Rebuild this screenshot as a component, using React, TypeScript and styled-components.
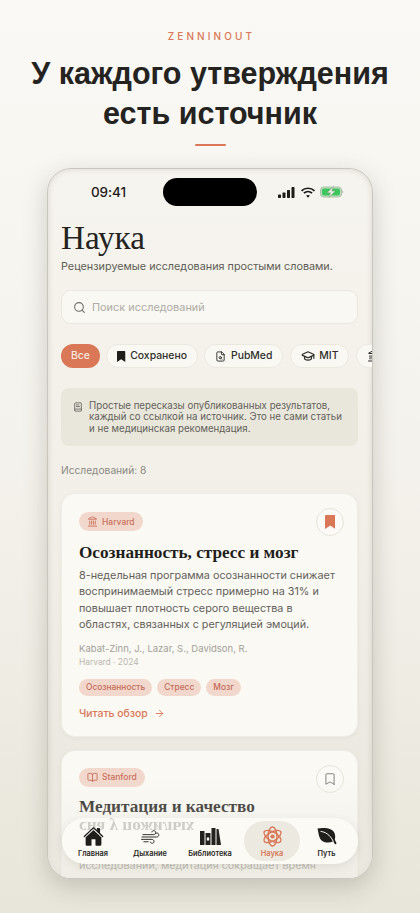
import React from 'react';
import styled, { createGlobalStyle } from 'styled-components';
import { Search, Landmark, GraduationCap, FileSearch, BookOpen, BookText, ArrowRight, Bookmark } from 'lucide-react';
import { IoHome } from 'react-icons/io5';

const Global = createGlobalStyle`
  html, body { margin: 0; padding: 0; }
  body { width: 420px; height: 913px; overflow: hidden; font-family: Inter, "Noto Sans", sans-serif; }
  * { box-sizing: border-box; }
`;

const Page = styled.div`
  width: 420px; height: 913px; overflow: hidden;
  background: linear-gradient(180deg, #faf9f5 0%, #f4f2ec 50%, #e8e6da 100%);
  display: flex; flex-direction: column; align-items: center; padding-top: 30px;
`;
const Brand = styled.div`
  font: 500 10px/12px Inter, sans-serif; letter-spacing: 3.1px; color: #d97757; margin-right: -3px;
`;
const Headline = styled.h1`
  margin: 11px 0 0; font: 700 30.5px/40px "Liberation Sans", Arial, sans-serif; color: #24231f; text-align: center;
`;
const Rule = styled.div`
  width: 31px; height: 2px; background: #d97757; margin-top: 11px; border-radius: 1px;
`;
const Phone = styled.div`
  position: relative; width: 326px; height: 711px; margin-top: 22px; border-radius: 24px; overflow: hidden;
  border: 1px solid #c9c7bd;
  box-shadow: 0 8px 24px rgba(60,55,40,.22), inset 0 0 6px rgba(90,85,70,.18);
  background: linear-gradient(180deg, #f6f4ee 0%, #f1efe7 50%, #e8e6dd 100%);
`;
const Status = styled.div`
  height: 47px; padding: 9px 0 0; display: grid; grid-template-columns: 1fr 94px 1fr; align-items: start;
`;
const Time = styled.div`
  font: 500 13.5px/28px Inter, sans-serif; color: #1d1c19; padding-left: 43px; letter-spacing: -.1px;
`;
const Island = styled.div`
  width: 94px; height: 28px; border-radius: 14px; background: #000;
`;
const StatusIcons = styled.div`
  display: flex; align-items: center; gap: 4.5px; height: 28px; padding-left: 21px;
`;
const Content = styled.div`
  padding: 3px 14px 0 13px;
`;
const Title = styled.h2`
  margin: 0; font: 400 33.2px/38px "Liberation Serif", "Times New Roman", serif; color: #24231f;
`;
const Sub = styled.p`
  margin: 2px 0 0; font: 400 10.8px/16px Inter, sans-serif; color: #5f5d56; white-space: nowrap;
`;
const SearchBox = styled.div`
  margin-top: 15px; height: 34px; border-radius: 10px; background: #f9f8f3; border: 1px solid #eae8de;
  display: flex; align-items: center; gap: 6px; padding: 0 11px; color: #6f6d66;
  font: 400 10.9px/16px Inter, sans-serif;
`;
const Placeholder = styled.span`
  color: #aeaca5;
`;
const Chips = styled.div`
  margin-top: 20px; display: flex; gap: 6.5px; width: 312px; overflow: hidden;
`;
const Chip = styled.div<{ $active?: boolean }>`
  flex: none; height: 24px; border-radius: 12px; padding: 0 10px;
  display: flex; align-items: center; gap: 4.5px; white-space: nowrap;
  font: 500 10.4px/14px Inter, sans-serif;
  color: ${p => (p.$active ? '#f8e9e0' : '#2e2d29')};
  background: ${p => (p.$active ? '#d97757' : '#f9f8f3')};
  border: ${p => (p.$active ? 'none' : '1px solid #ebe9df')};
`;
const Notice = styled.div`
  margin-top: 20px; height: 58px; border-radius: 8px; background: #e9e7dc; padding: 11.5px 10px 0 12px;
  display: flex; gap: 6px; color: #63615a; font: 400 9.7px/11.6px Inter, sans-serif;
`;
const Count = styled.div`
  margin-top: 17px; font: 400 10.2px/14px Inter, sans-serif; color: #8b8982;
`;
const Card = styled.article`
  position: relative; margin-top: 16px; border-radius: 14px; background: #faf9f4; padding: 17px 14px 15px 17px;
  border: 1px solid #efeee6; box-shadow: 0 1px 4px rgba(80,70,50,.05);
`;
const Card2 = styled(Card)`
  margin-top: 13px; padding-top: 16px;
`;
const Source = styled.div`
  display: inline-flex; align-items: center; gap: 4px; height: 19px; border-radius: 10px; padding: 0 8px;
  background: #f2d8cc; color: #c9705c; font: 500 8.5px/12px Inter, sans-serif;
`;
const Save = styled.div`
  position: absolute; top: 14px; right: 13px; width: 28px; height: 28px; border-radius: 50%;
  background: #fbfaf6; border: 1px solid #e6e4da; display: flex; align-items: center; justify-content: center;
  color: #6c6a63;
`;
const CardTitle = styled.h3`
  margin: 10px 0 0; font: 700 17.2px/24px "Liberation Serif", "Times New Roman", serif; color: #1f1e1b; white-space: nowrap;
`;
const CardTitle2 = styled(CardTitle)`
  margin-top: 9px; line-height: 22px;
`;
const Body = styled.p`
  margin: 3px 0 0; font: 400 10.8px/16.4px Inter, sans-serif; color: #63615a; white-space: nowrap;
`;
const Body2 = styled(Body)`
  margin-top: 2px;
`;
const Authors = styled.div`
  margin-top: 8px; font: 400 9.5px/14px Inter, sans-serif; color: #a3a199;
`;
const Meta = styled.div`
  margin-top: 1px; font: 400 8.4px/11px Inter, sans-serif; color: #bab8b0;
`;
const Tags = styled.div`
  display: flex; gap: 5px; margin-top: 11px;
`;
const Tag = styled.span`
  height: 17px; padding: 0 7px; border-radius: 9px; background: #f2d8cc; color: #c46a58;
  font: 500 8.4px/17px Inter, sans-serif;
`;
const Read = styled.div`
  margin-top: 11px; display: flex; align-items: center; gap: 6px; font: 500 10.4px/14px Inter, sans-serif; color: #d97757;
`;
const Fade = styled.div`
  position: absolute; left: 0; right: 0; bottom: 0; height: 100px; pointer-events: none;
  background: linear-gradient(180deg, rgba(235,233,224,0) 0%, rgba(235,233,224,.75) 100%);
`;
const Nav = styled.nav`
  position: absolute; left: 14px; bottom: 14px; width: 296px; height: 46px; border-radius: 23px;
  background: #fbfaf5; display: grid; grid-template-columns: 62px 52px 68px 56px 53px;
  box-shadow: 0 3px 10px rgba(70,65,50,.1); overflow: hidden;
`;
const Mirror = styled.div`
  position: absolute; left: 17px; top: 2px; transform: scaleY(-1); white-space: nowrap;
  font: 700 17.2px/15px "Liberation Serif", serif; color: #8c8a83; opacity: .4; filter: blur(.6px);
`;
const NavItem = styled.div<{ $active?: boolean }>`
  position: relative; display: flex; flex-direction: column; align-items: center; padding-top: 8px; height: 46px;
  font: 600 7.4px/10px Inter, sans-serif; color: ${p => (p.$active ? '#d97757' : '#2a2926')};
`;
const ActiveBg = styled.div`
  position: absolute; left: 0; right: 0; top: 3px; height: 40px; border-radius: 20px; background: #ebe9e0;
`;
const NavIcon = styled.div`
  position: relative; height: 21px; display: flex; align-items: center; justify-content: center; margin-bottom: 2px;
`;
const NavLabel = styled.span`
  position: relative; white-space: nowrap;
`;

const FilledBookmark = ({ color, size = 11 }: { color: string; size?: number }) => (
  <svg width={size * .75} height={size} viewBox="0 0 12 16"><path d="M1 0h10a1 1 0 0 1 1 1v15l-6-4-6 4V1a1 1 0 0 1 1-1z" fill={color} /></svg>
);

const Wind = () => (
  <svg width="19" height="18" viewBox="0 0 20 18" fill="none" stroke="#2a2926" strokeWidth="1" strokeLinecap="round">
    <path d="M2 6.5h11.5c2.2 0 2.6-3.8.3-4.2-1.3-.2-2.1.5-2.3 1.4" />
    <path d="M1 9h15.5c2.6 0 3-3.7.6-4.2-.8-.1-1.4.1-1.9.6" />
    <path d="M0.5 11.5h11c2.5 0 3 3.6.6 4.1-1.2.2-2-.4-2.3-1.3" />
    <path d="M3 14h4.5" />
  </svg>
);
const Books = () => (
  <svg width="21" height="19" viewBox="0 0 21 18" fill="#23221f">
    <rect x="0" y="3.5" width="4.5" height="14" />
    <path d="M5.5 5.5h5v12h-5z M6.8 10v3h2.4v-3z" fillRule="evenodd" />
    <rect x="11.5" y="0.5" width="4" height="17" />
    <path d="M16.5 1.5h2l2.5 16h-4.5z" />
  </svg>
);
const Atom = () => (
  <svg width="21" height="21" viewBox="-11 -11 22 22" fill="none" stroke="#d97757" strokeWidth="1.5">
    <ellipse rx="10" ry="4.6" transform="rotate(90)" />
    <ellipse rx="10" ry="4.6" transform="rotate(30)" />
    <ellipse rx="10" ry="4.6" transform="rotate(150)" />
    <circle r="2.2" fill="#d97757" stroke="none" />
  </svg>
);
const Leaf = () => (
  <svg width="20" height="20" viewBox="0 0 20 20">
    <path d="M0.5 1.5C4 0.8 10 0.6 14 2.5c3.8 1.9 5 6.2 3.8 10.2l1.8 3.6-1.4 1.2-2.1-3.2c-4 2.2-9 1.5-12-1.4C1.6 10.3 1.6 5 .5 1.5z" fill="#1f1e1b" />
    <path d="M4 4.5c4 .4 8.6 2.6 12.2 9.6" fill="none" stroke="#fbfaf5" strokeWidth="1" strokeLinecap="round" />
  </svg>
);
const Signal = () => (
  <svg width="17" height="11" viewBox="0 0 17 11" fill="#1d1c19">
    <rect x="0" y="7.5" width="3" height="3.5" rx=".7" /><rect x="4.5" y="5.5" width="3" height="5.5" rx=".7" />
    <rect x="9" y="3" width="3" height="8" rx=".7" /><rect x="13.5" y="0" width="3" height="11" rx=".7" />
  </svg>
);
const Wifi = () => (
  <svg width="16" height="11" viewBox="0 0 15 11" fill="none" stroke="#1d1c19" strokeWidth="1.7">
    <path d="M1 3.8C4.6.4 10.4.4 14 3.8" /><path d="M3.4 6.2c2.3-2 5.9-2 8.2 0" />
    <path d="M7.5 10.8 5.6 8.6c1-.9 2.8-.9 3.8 0z" fill="#1d1c19" stroke="none" />
  </svg>
);
const Battery = () => (
  <svg width="24" height="12" viewBox="0 0 24 11">
    <rect x=".5" y=".5" width="21" height="10" rx="3" fill="#c5ddc4" stroke="#a9c4aa" />
    <rect x="2" y="2" width="18" height="7" rx="1.8" fill="#3cc65e" />
    <path d="M13.5 0 7 6.3h3.5L9 11l6.2-6.4h-3.5z" fill="#eef0e6" stroke="#8e9a8c" strokeWidth=".5" />
    <path d="M22.5 3.8c.9.3.9 3.1 0 3.4z" fill="#9a9a92" />
  </svg>
);

const App = () => (
  <Page>
    <Global />
    <Brand>ZENNINOUT</Brand>
    <Headline>У каждого утверждения<br />есть источник</Headline>
    <Rule />
    <Phone>
      <Status>
        <Time>09:41</Time>
        <Island />
        <StatusIcons><Signal /><Wifi /><Battery /></StatusIcons>
      </Status>
      <Content>
        <Title>Наука</Title>
        <Sub>Рецензируемые исследования простыми словами.</Sub>
        <SearchBox><Search size={13} /><Placeholder>Поиск исследований</Placeholder></SearchBox>
        <Chips>
          <Chip $active>Все</Chip>
          <Chip><FilledBookmark color="#1f1e1b" />Сохранено</Chip>
          <Chip><FileSearch size={11} />PubMed</Chip>
          <Chip><GraduationCap size={14} />MIT</Chip>
          <Chip><Landmark size={12} />Harvard</Chip>
        </Chips>
        <Notice>
          <BookText size={10} style={{ flex: 'none', marginTop: 2 }} />
          <span>Простые пересказы опубликованных результатов,<br />каждый со ссылкой на источник. Это не сами статьи<br />и не медицинская рекомендация.</span>
        </Notice>
        <Count>Исследований: 8</Count>
        <Card>
          <Source><Landmark size={11} />Harvard</Source>
          <Save><FilledBookmark color="#d97757" size={14} /></Save>
          <CardTitle>Осознанность, стресс и мозг</CardTitle>
          <Body>8-недельная программа осознанности снижает<br />воспринимаемый стресс примерно на 31% и<br />повышает плотность серого вещества в<br />областях, связанных с регуляцией эмоций.</Body>
          <Authors>Kabat-Zinn, J., Lazar, S., Davidson, R.</Authors>
          <Meta>Harvard · 2024</Meta>
          <Tags><Tag>Осознанность</Tag><Tag>Стресс</Tag><Tag>Мозг</Tag></Tags>
          <Read>Читать обзор <ArrowRight size={11} /></Read>
        </Card>
        <Card2>
          <Source><BookOpen size={11} />Stanford</Source>
          <Save><Bookmark size={14} strokeWidth={1.4} /></Save>
          <CardTitle2>Медитация и качество<br />сна у пожилых</CardTitle2>
          <Body2>По данным метаанализа контролируемых<br />исследований, медитация сокращает время</Body2>
        </Card2>
      </Content>
      <Fade />
      <Nav>
        <Mirror>сна у пожилых</Mirror>
        <NavItem><NavIcon><IoHome size={21} color="#1f1e1b" /></NavIcon><NavLabel>Главная</NavLabel></NavItem>
        <NavItem><NavIcon><Wind /></NavIcon><NavLabel>Дыхание</NavLabel></NavItem>
        <NavItem><NavIcon><Books /></NavIcon><NavLabel>Библиотека</NavLabel></NavItem>
        <NavItem $active><ActiveBg /><NavIcon><Atom /></NavIcon><NavLabel>Наука</NavLabel></NavItem>
        <NavItem><NavIcon><Leaf /></NavIcon><NavLabel>Путь</NavLabel></NavItem>
      </Nav>
    </Phone>
  </Page>
);

export default App;
